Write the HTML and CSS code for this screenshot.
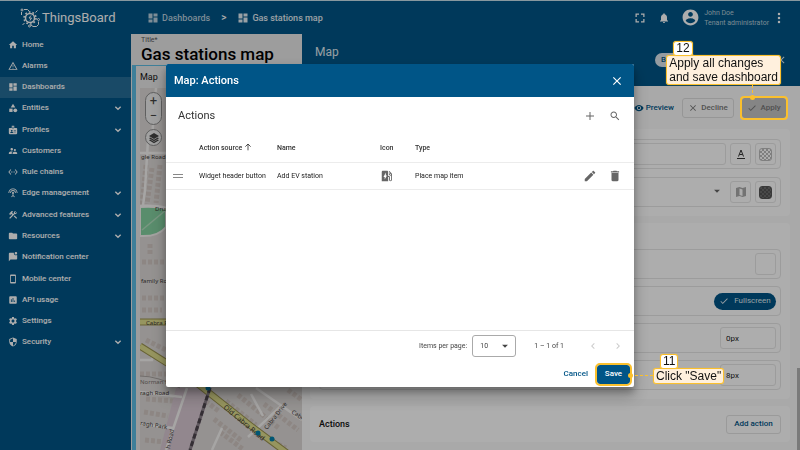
FILE: index.html
```html
<!DOCTYPE html>
<html lang="en">
<head>
<meta charset="utf-8">
<title>ThingsBoard</title>
<link rel="stylesheet" href="styles.css">
</head>
<body>
<svg class="defs" aria-hidden="true">
  <symbol id="dash" viewBox="0 0 24 24"><path d="M3 13h8V3H3v10zm0 8h8v-6H3v6zm10 0h8V11h-8v10zm0-18v6h8V3h-8z"/></symbol>
  <symbol id="down" viewBox="0 0 24 24"><path d="M4 8l8 8 8-8" fill="none" stroke="currentColor" stroke-width="4"/></symbol>
  <symbol id="close" viewBox="0 0 24 24"><path d="M19 6.41L17.59 5 12 10.59 6.41 5 5 6.41 10.59 12 5 17.59 6.41 19 12 13.41 17.59 19 19 17.59 13.41 12z"/></symbol>
  <symbol id="check" viewBox="0 0 24 24"><path d="M9 16.17L4.83 12l-1.42 1.41L9 19 21 7l-1.41-1.41z"/></symbol>
  <symbol id="caret" viewBox="0 0 24 24"><path d="M5 9l7 7 7-7z"/></symbol>
</svg>
<div class="app">
  <header class="topbar">
    <a class="brand" href="#">
      <svg class="logo" viewBox="0 0 40 40" fill="none" stroke="currentColor" stroke-width="2">
        <circle cx="20" cy="20" r="9" stroke-width="3"/><circle cx="20" cy="20" r="12" stroke-width="3" stroke-dasharray="3.500 4"/>
        <path d="M22 15l-4 5h5l-3 5"/>
        <path d="M3 14V8M8 3h7l4 4M37 27v6l-4 4h-7l-4-3M9 30l-4 4M31 9l4-4"/>
        <circle cx="4" cy="4" r="2"/><circle cx="37" cy="23" r="2"/><circle cx="19" cy="36" r="2"/>
      </svg>
      <span>ThingsBoard</span>
    </a>
    <nav class="crumbs" aria-label="Breadcrumb">
      <a class="crumb" href="#"><svg class="i12"><use href="#dash"/></svg>Dashboards</a>
      <span class="sep">&gt;</span>
      <a class="crumb current" href="#"><svg class="i12"><use href="#dash"/></svg>Gas stations map</a>
    </nav>
    <div class="tools">
      <button class="icon-btn" aria-label="Fullscreen"><svg class="i12" viewBox="0 0 24 24"><path d="M3 3h7v2.500H5.500V10H3zM14 3h7v7h-2.500V5.500H14zM3 14h2.500v4.500H10V21H3zM18.500 14H21v7h-7v-2.500h4.500z"/></svg></button>
      <button class="icon-btn" aria-label="Notifications"><svg class="i12" viewBox="0 0 24 24"><path d="M12 22c1.100 0 2-.9 2-2h-4c0 1.100.89 2 2 2zm6-6v-5c0-3.070-1.640-5.640-4.500-6.320V4c0-.83-.67-1.500-1.500-1.500s-1.500.67-1.500 1.500v.68C7.630 5.360 6 7.920 6 11v5l-2 2v1h16v-1l-2-2z"/></svg></button>
      <div class="user">
        <svg class="i18" viewBox="0 0 24 24"><path d="M12 2C6.480 2 2 6.480 2 12s4.480 10 10 10 10-4.480 10-10S17.520 2 12 2zm0 3c1.660 0 3 1.340 3 3s-1.340 3-3 3-3-1.340-3-3 1.340-3 3-3zm0 14.200c-2.500 0-4.710-1.280-6-3.220.03-1.990 4-3.080 6-3.080 1.990 0 5.970 1.090 6 3.080-1.290 1.940-3.500 3.220-6 3.220z"/></svg>
        <div><div>John Doe</div><div>Tenant administrator</div></div>
      </div>
      <button class="icon-btn" aria-label="More"><svg class="i12" viewBox="0 0 24 24"><circle cx="12" cy="4" r="2.500"/><circle cx="12" cy="12" r="2.500"/><circle cx="12" cy="20" r="2.500"/></svg></button>
    </div>
  </header>

  <nav class="side" aria-label="Main">
    <a href="#"><svg viewBox="0 0 24 24"><path d="M10 20v-6h4v6h5v-8h3L12 3 2 12h3v8z"/></svg>Home</a>
    <a href="#"><svg viewBox="0 0 24 24"><path d="M12 5.990L19.530 19H4.470L12 5.990M12 2L1 21h22L12 2zm1 14h-2v2h2v-2zm0-6h-2v4h2v-4z"/></svg>Alarms</a>
    <a href="#" class="active"><svg><use href="#dash"/></svg>Dashboards</a>
    <a href="#"><svg viewBox="0 0 24 24"><path d="M12 2l-5.500 9h11z"/><circle cx="17.500" cy="17.500" r="4.500"/><path d="M3 13.500h8v8H3z"/></svg>Entities<svg class="exp"><use href="#down"/></svg></a>
    <a href="#"><svg viewBox="0 0 24 24"><path fill-rule="evenodd" d="M9 7V2h6v5h5a2 2 0 0 1 2 2v11a2 2 0 0 1-2 2H4a2 2 0 0 1-2-2V9c0-1.100.9-2 2-2zm2-3v5h2V4zM9 12a2 2 0 1 0 .01 0zM5 19h8c0-3-8-3-8 0zm9-6v1.500h5V13zm0 3v1.500h5V16z"/></svg>Profiles<svg class="exp"><use href="#down"/></svg></a>
    <a href="#"><svg viewBox="0 0 24 24"><path d="M16.500 12c1.380 0 2.490-1.120 2.490-2.500S17.880 7 16.500 7C15.120 7 14 8.120 14 9.500s1.120 2.500 2.500 2.500zM9 11c1.660 0 2.990-1.340 2.990-3S10.660 5 9 5C7.340 5 6 6.340 6 8s1.340 3 3 3zm7.500 3c-1.830 0-5.500.92-5.500 2.750V19h11v-2.250c0-1.830-3.670-2.750-5.500-2.750zM9 13c-2.330 0-7 1.170-7 3.500V19h7v-2.250c0-.85.33-2.340 2.370-3.470C10.500 13.100 9.660 13 9 13z"/></svg>Customers</a>
    <a href="#"><svg viewBox="0 0 24 24"><path d="M7.770 6.760L6.230 5.480.82 12l5.410 6.520 1.540-1.280L3.420 12l4.350-5.240zM7 13h2v-2H7v2zm10-2h-2v2h2v-2zm-6 2h2v-2h-2v2zm6.770-7.520l-1.540 1.280L20.580 12l-4.350 5.240 1.540 1.280L23.180 12l-5.410-6.520z"/></svg>Rule chains</a>
    <a href="#"><svg viewBox="0 0 24 24"><path d="M12 5c-3.870 0-7 3.130-7 7h2c0-2.760 2.240-5 5-5s5 2.240 5 5h2c0-3.870-3.130-7-7-7zm1 9.290c.88-.39 1.500-1.260 1.500-2.290 0-1.380-1.120-2.500-2.500-2.500S9.500 10.620 9.500 12c0 1.020.62 1.900 1.500 2.290v3.300L7.590 21 9 22.410l3-3 3 3L16.410 21 13 17.590v-3.300zM12 1C5.930 1 1 5.930 1 12h2c0-4.970 4.030-9 9-9s9 4.030 9 9h2c0-6.070-4.930-11-11-11z"/></svg>Edge management<svg class="exp"><use href="#down"/></svg></a>
    <a href="#"><svg viewBox="0 0 24 24"><path d="M13.780 15.170l2.120-2.120 6 6-2.120 2.120zM17.500 10c1.930 0 3.500-1.570 3.500-3.500 0-.58-.16-1.120-.41-1.600l-2.700 2.700-1.490-1.490 2.700-2.700c-.48-.25-1.020-.41-1.600-.41C15.570 3 14 4.570 14 6.500c0 .41.08.8.21 1.160l-1.850 1.850-1.780-1.780.71-.71-1.410-1.410L12 3.490c-1.170-1.170-3.070-1.170-4.240 0L4.220 7.030l1.410 1.410H2.810l-.71.71 3.540 3.540.71-.71V9.150l1.410 1.410.71-.71 1.780 1.780-7.410 7.410 2.120 2.120L16.340 9.790c.36.13.75.21 1.160.21z"/></svg>Advanced features<svg class="exp"><use href="#down"/></svg></a>
    <a href="#"><svg viewBox="0 0 24 24"><path d="M10 4H4c-1.100 0-2 .9-2 2v12c0 1.100.9 2 2 2h16c1.100 0 2-.9 2-2V8c0-1.100-.9-2-2-2h-8l-2-2z"/></svg>Resources<svg class="exp"><use href="#down"/></svg></a>
    <a href="#"><svg viewBox="0 0 24 24"><path d="M22 6.980V16c0 1.100-.9 2-2 2H6l-4 4V4c0-1.100.9-2 2-2h10.100c-.06.32-.1.66-.1 1 0 2.760 2.240 5 5 5 1.130 0 2.160-.39 3-1.020zM16 3c0 1.660 1.340 3 3 3s3-1.340 3-3-1.340-3-3-3-3 1.340-3 3z"/></svg>Notification center</a>
    <a href="#"><svg viewBox="0 0 24 24"><path d="M17 1.010L7 1c-1.100 0-2 .9-2 2v18c0 1.100.9 2 2 2h10c1.100 0 2-.9 2-2V3c0-1.100-.9-1.990-2-1.990zM17 19H7V5h10v14z"/></svg>Mobile center</a>
    <a href="#"><svg viewBox="0 0 24 24"><path d="M19 3H5c-1.100 0-2 .9-2 2v14c0 1.100.9 2 2 2h14c1.100 0 2-.9 2-2V5c0-1.100-.9-2-2-2zM9 17H7v-7h2v7zm4 0h-2V7h2v10zm4 0h-2v-4h2v4z"/></svg>API usage</a>
    <a href="#"><svg viewBox="0 0 24 24"><path d="M19.140 12.940c.04-.3.060-.61.060-.94 0-.32-.02-.64-.07-.94l2.030-1.580c.18-.14.23-.41.120-.61l-1.920-3.320c-.12-.22-.37-.29-.59-.22l-2.390.96c-.5-.38-1.030-.7-1.620-.94L14.400 2.810c-.04-.24-.24-.41-.48-.41h-3.840c-.24 0-.43.17-.47.41L9.250 5.350c-.59.24-1.130.57-1.620.94l-2.390-.96c-.22-.08-.47 0-.59.22L2.740 8.870c-.12.21-.08.47.12.61l2.030 1.580c-.05.3-.09.63-.09.94s.02.64.07.94l-2.030 1.580c-.18.14-.23.41-.12.61l1.920 3.320c.12.22.37.29.59.22l2.390-.96c.5.38 1.030.7 1.620.94l.36 2.540c.05.24.24.41.48.41h3.840c.24 0 .44-.17.47-.41l.36-2.540c.59-.24 1.130-.56 1.620-.94l2.390.96c.22.08.47 0 .59-.22l1.920-3.320c.12-.22.070-.47-.12-.61l-2.010-1.580zM12 15.600c-1.980 0-3.600-1.620-3.600-3.600s1.620-3.600 3.600-3.600 3.600 1.620 3.600 3.600-1.620 3.600-3.600 3.600z"/></svg>Settings</a>
    <a href="#"><svg viewBox="0 0 24 24"><path d="M12 1L3 5v6c0 5.550 3.840 10.740 9 12 5.160-1.260 9-6.450 9-12V5l-9-4zm0 10.990h7c-.53 4.120-3.280 7.790-7 8.940V12H5V6.300l7-3.110v8.800z"/></svg>Security<svg class="exp"><use href="#down"/></svg></a>
  </nav>

  <section class="board">
    <div class="board-title"><small>Title*</small><h1>Gas stations map</h1></div>
    <div class="widget">
      <h2>Map</h2>
      <div class="map">
        <svg class="map-art" viewBox="140 88 162 362" preserveAspectRatio="xMinYMin slice" font-family="Noto Sans, sans-serif" font-size="6">
          <path fill="#dcd8d6" d="M140 88h162v362H140z"/>
          <g stroke="#d0c6c1" stroke-width="5" stroke-dasharray="4 2" fill="none">
            <path d="M146 165l-4 40M152 168l-5 36M160 165l-4 38M142 262h24M150 244v12M142 298h24M142 310h20M146 340l20 10M140 374h26M146 399l28 2M144 412l24 4M145 440l20 2M188 398l-16 45M196 394l24 18M226 401l30 24M238 395l42 34M214 419l28 22M220 432l24 18M264 404l34 26M256 434l30 14M288 390l14 10"/>
          </g>
          <path d="M176 388h36l-20 62h-32z" fill="#d8c8d2"/>
          <path d="M140 207q18-1 26 2v18q-8 10-26 9z" fill="#84d0a0" stroke="#f3f1ef" stroke-width="2"/>
          <path d="M142 230l24-20" stroke="#b3dfbf" stroke-width="1.500"/>
          <g fill="none" stroke="#f5f3f2" stroke-width="2.500">
            <path d="M148 140l-3 50-2 16M140 206q16-1 26 2M140 153h26M156 88l-4 50M140 392l42 5M187 388l-21 62M140 424l33 4M140 360h12l2-8M282 405l-34 32M256 388l46 32M222 428l-10 22M263 416l-12-22"/>
          </g>
          <path d="M140 376q18 0 40 12" fill="none" stroke="#a9a3a0" stroke-width="1"/>
          <g fill="none"><path d="M140 322h28M140 346l27 17 10 5 26 20 44 35 44 33" stroke="#99914f" stroke-width="7"/><path d="M140 322h28M140 346l27 17 10 5 26 20 44 35 44 33" stroke="#dedc8c" stroke-width="5"/>
          <path d="M210 388l-20 62" stroke="#8b8089" stroke-width="3"/><path d="M210 388l-20 62" stroke="#4d454d" stroke-width="3" stroke-dasharray="5 3"/></g>
          <g fill="#3d3938"><text x="141" y="159">gle Road</text><text x="155" y="211">Drumcliffe</text><text x="141" y="283">family Road</text><text x="146" y="325">Cabra Road</text><text x="140" y="384" fill="#77706d">Norman M</text><text x="140" y="395">ragh Road</text><text transform="translate(140 425) rotate(9)">ragh Park</text><text transform="translate(170 449) rotate(-78)">h Road</text><text transform="translate(223 408) rotate(40)" font-size="7">Old Cabra Road</text><text transform="translate(267 430) rotate(-52)">Cabra Drive</text><text transform="translate(291 413) rotate(34)">Cabra</text></g>
          <g fill="#007fac"><circle cx="208" cy="388" r="2.500"/><circle cx="258" cy="433" r="2.500"/><circle cx="272" cy="439" r="2.500"/></g>
        </svg>
        <div class="map-controls">
          <div class="zoom-box"><button aria-label="Zoom in">+</button><button aria-label="Zoom out">−</button></div>
          <button class="layers" aria-label="Layers"><svg class="i12" viewBox="0 0 24 24"><path d="M12 2L2 8l10 6 10-6zM4.500 11L2 12.500l10 6 10-6-2.500-1.500-7.500 4.500zM4.500 15L2 16.500l10 6 10-6-2.500-1.500-7.500 4.500z"/></svg></button>
        </div>
      </div>
    </div>
  </section>

  <section class="panel">
    <header class="panel-head"><h2>Map</h2><div class="panel-modes"><button class="mode">Basic</button><button class="icon-btn" aria-label="Close panel"><svg class="i12"><use href="#close"/></svg></button></div></header>
    <div class="panel-body">
      <div class="panel-actions">
        <button class="txt-btn"><svg class="i10" viewBox="0 0 24 24"><path d="M12 4.500C7 4.500 2.730 7.610 1 12c1.730 4.390 6 7.500 11 7.500s9.270-3.110 11-7.500c-1.730-4.390-6-7.500-11-7.500zM12 17c-2.760 0-5-2.240-5-5s2.240-5 5-5 5 2.240 5 5-2.240 5-5 5zm0-8a3 3 0 1 0 0 6 3 3 0 0 0 0-6z"/></svg>Preview</button>
        <button class="flat-btn outline"><svg class="i10"><use href="#close"/></svg>Decline</button>
        <div class="apply-wrap">
          <button class="flat-btn filled"><svg class="i10"><use href="#check"/></svg>Apply</button>
          <div class="ring"></div>
          <div class="note note-apply"><b>12</b><p>Apply all changes<br>and save dashboard</p><i></i></div>
        </div>
      </div>
      <div class="cards">
        <div class="card first">
          <div class="row"><input class="field grow" type="text" aria-label="Text"><button class="sq" aria-label="Font"><svg class="i12" viewBox="0 0 24 24"><path d="M7 17l5-13 5 13M9 13h6" stroke="currentColor" stroke-width="2" fill="none"/><path d="M4 20h16v2H4z"/></svg></button><button class="sq" aria-label="Color"><span class="swatch light"></span></button></div>
          <div class="row"><span class="grow right"><svg class="i10"><use href="#caret"/></svg></span><button class="sq faint" aria-label="Map"><svg class="i12" viewBox="0 0 24 24"><path fill-rule="evenodd" d="M2 4l7-2 6 2 7-2v18l-7 2-6-2-7 2zm7 1v13l6 2V7z"/></svg></button><button class="sq" aria-label="Icon color"><span class="swatch dark"></span></button></div>
        </div>
        <div class="card second">
          <div class="row"><span class="grow"></span><button class="sq" aria-label="Background"></button></div>
          <div class="row"><span class="grow"></span><button class="pill"><svg class="i10"><use href="#check"/></svg>Fullscreen</button></div>
          <div class="row"><span class="grow"></span><input class="field num" type="text" aria-label="Padding" value="0px"></div>
          <div class="row"><span class="grow"></span><input class="field num" type="text" aria-label="Border radius" value="8px"></div>
        </div>
        <div class="card actions"><h3>Actions</h3><button class="add">Add action</button></div>
      </div>
      <div class="scroll"></div>
    </div>
  </section>
</div>

<div class="overlay">
  <section class="dialog" role="dialog" aria-labelledby="dlg">
    <header class="dlg-head"><h2 id="dlg">Map: Actions</h2><button class="icon-btn" aria-label="Close"><svg class="i14"><use href="#close"/></svg></button></header>
    <div class="dlg-tools"><h3>Actions</h3>
      <button class="icon-btn" aria-label="Add"><svg class="i12" viewBox="0 0 24 24"><path d="M20 13h-7v7h-2v-7H4v-2h7V4h2v7h7z"/></svg></button>
      <button class="icon-btn" aria-label="Search"><svg class="i12" viewBox="0 0 24 24"><path d="M15.500 14h-.79l-.28-.27C15.410 12.590 16 11.110 16 9.500 16 5.910 13.090 3 9.500 3S3 5.910 3 9.500 5.910 16 9.500 16c1.610 0 3.090-.59 4.230-1.570l.27.28v.79l5 4.990L20.490 19l-4.990-5zm-6 0C7.010 14 5 11.990 5 9.500S7.010 5 9.500 5 14 7.010 14 9.500 11.990 14 9.500 14z"/></svg></button>
    </div>
    <div class="dlg-table">
      <table>
        <colgroup><col class="c-drag"><col class="c-src"><col class="c-name"><col class="c-icon"><col><col class="c-act"></colgroup>
        <thead><tr><th></th><th>Action source <svg class="i8" viewBox="0 0 24 24"><path d="M12 22V3M4 11l8-8 8 8" fill="none" stroke="currentColor" stroke-width="2.500"/></svg></th><th>Name</th><th>Icon</th><th>Type</th><th></th></tr></thead>
        <tbody><tr>
          <td><svg class="i12" viewBox="0 0 24 24"><path d="M2 8h20v2H2zM2 14h20v2H2z"/></svg></td><td>Widget header button</td><td>Add EV station</td>
          <td><svg class="i14" viewBox="0 0 24 24"><path d="M19.770 7.230l.01-.01-3.720-3.720L15 4.560l2.110 2.110C16.170 7 15.500 7.930 15.500 9c0 1.380 1.120 2.500 2.500 2.500.36 0 .69-.08 1-.21v7.210c0 .55-.45 1-1 1s-1-.45-1-1V14c0-1.100-.9-2-2-2h-1V5c0-1.100-.9-2-2-2H5c-1.100 0-2 .9-2 2v16h11v-7.500h1.500v5c0 1.380 1.120 2.500 2.500 2.500s2.500-1.120 2.500-2.500V9c0-.69-.28-1.320-.73-1.770zM18 10c-.55 0-1-.45-1-1s.45-1 1-1 1 .45 1 1-.45 1-1 1zM8 18v-4.500H6L10 6v5h2l-4 7z"/></svg></td>
          <td>Place map item</td>
          <td><div class="row-btns"><button class="icon-btn" aria-label="Edit"><svg class="i14" viewBox="0 0 24 24"><path d="M3 17.250V21h3.750L17.810 9.940l-3.750-3.750L3 17.250zM20.710 7.040c.39-.39.39-1.020 0-1.410l-2.340-2.340c-.39-.39-1.020-.39-1.410 0l-1.830 1.830 3.750 3.750 1.830-1.830z"/></svg></button><button class="icon-btn" aria-label="Delete"><svg class="i14" viewBox="0 0 24 24"><path d="M6 19c0 1.100.9 2 2 2h8c1.100 0 2-.9 2-2V7H6v12zM19 4h-3.500l-1-1h-5l-1 1H5v2h14V4z"/></svg></button></div></td>
        </tr></tbody>
      </table>
    </div>
    <div class="pager">
      <label for="size">Items per page:</label>
      <span class="select"><select id="size"><option>10</option></select><svg class="i10"><use href="#caret"/></svg></span>
      <span class="range">1 – 1 of 1</span>
      <button class="icon-btn" aria-label="Previous" disabled><svg class="i12" viewBox="0 0 24 24"><path d="M15.410 7.410L14 6l-6 6 6 6 1.410-1.410L10.830 12z"/></svg></button>
      <button class="icon-btn" aria-label="Next" disabled><svg class="i12" viewBox="0 0 24 24"><path d="M10 6L8.590 7.410 13.170 12l-4.580 4.590L10 18l6-6z"/></svg></button>
    </div>
    <footer class="dlg-foot"><button class="cancel">Cancel</button>
      <div class="save-wrap"><button class="save">Save</button><div class="note note-save"><b>11</b><p>Click "Save"</p><i></i></div></div>
    </footer>
  </section>
</div>
</body>
</html>
```

FILE: styles.css
```css
* { box-sizing: border-box; }
body { margin: 0; font: 7px/10px Roboto, sans-serif; color: #222; }
h1, h2, h3, p { margin: 0; font-weight: 500; }
a { color: inherit; text-decoration: none; }
button, input, select { font: inherit; color: inherit; margin: 0; padding: 0; border: 0; background: none; border-radius: 3px; }
button { display: inline-flex; align-items: center; justify-content: center; }
svg { fill: currentColor; flex: none; }
.defs { position: absolute; width: 0; height: 0; }
.i8 { width: 8px; height: 8px; }
.i10 { width: 10px; height: 10px; }
.i12 { width: 12px; height: 12px; }
.i14 { width: 14px; height: 14px; }
.i18 { width: 19px; height: 19px; }

.app {
  display: grid;
  grid-template: 34px minmax(0, 1fr) / 131px 171px minmax(0, 1fr);
  height: 100vh;
  background: #005587;
  overflow: hidden;
}
.topbar { grid-column: 1 / -1; display: flex; align-items: center; color: #fff; border-top: 1px solid #c9e0ea; }
.brand { display: flex; align-items: center; gap: 2px; width: 147px; padding-left: 20px; font-size: 13px; line-height: 16px; }
.logo { width: 20px; height: 20px; fill: none; }
.crumbs { display: flex; align-items: center; gap: 11px; font-size: 9px; font-weight: 500; }
.crumb { display: flex; align-items: center; gap: 3px; color: #b9cfdd; }
.current { color: #e4edf3; }
.sep { font-size: 10px; }
.tools { display: flex; align-items: center; gap: 12px; margin-left: auto; padding-right: 15px; }
.user { display: flex; align-items: center; gap: 4px; color: #b6cbd8; margin: 0 -8px 0 -1px; }
.user svg { color: #fff; }

.side { display: grid; grid-auto-rows: 1fr; height: 319px; color: #fff; font-size: 8px; font-weight: 500; }
.side a { display: flex; align-items: center; gap: 4px; padding: 0 8px; }
.side svg { width: 10px; height: 10px; }
.side .exp { width: 8px; height: 8px; margin: 0 1px 0 auto; }
.side .active { background: rgba(255, 255, 255, .15); }

.board { display: flex; flex-direction: column; background: #e8e8e8; min-height: 0; }
.board-title { height: 31px; padding: 1px 10px 0; color: #555; }
.board-title small { display: block; font-size: 7px; line-height: 10px; }
.board-title h1 { color: #000; font-size: 17px; line-height: 18px; white-space: nowrap; }
.widget { flex: 1; display: flex; flex-direction: column; min-height: 0; margin-left: 1px; border: solid #5cbce2; border-width: 1px 0 0 4px; padding-left: 4px; }
.widget h2 { font-size: 9px; line-height: 22px; font-weight: 400; color: #111; }
.map { position: relative; flex: 1; min-height: 0; overflow: hidden; }
.map-art { display: block; width: 100%; height: 100%; }
.map-controls { position: absolute; left: 5px; top: 4px; display: flex; flex-direction: column; align-items: center; gap: 4px; }
.zoom-box { display: grid; width: 17px; height: 33px; border: 1px solid #8c8c8c; border-radius: 9px; background: #eee; font-size: 13px; color: #444; }
.layers { width: 17px; height: 17px; border: 1px solid #8c8c8c; border-radius: 50%; background: #eee; color: #444; }

.panel { display: flex; flex-direction: column; min-width: 0; min-height: 0; }
.panel-head { display: flex; align-items: center; justify-content: space-between; height: 52px; padding: 0 13px 16px; color: #dfe9f0; }
.panel-head h2 { font-size: 12px; line-height: 14px; font-weight: 400; }
.panel-modes { display: flex; align-items: center; gap: 79px; margin-top: 16px; }
.mode { width: 41px; height: 14px; padding-left: 6px; justify-content: flex-start; border-radius: 7px; background: #dce6ed; color: #005587; font-size: 8px; font-weight: 500; }
.panel-body { position: relative; flex: 1; background: #fafafa; min-height: 0; }
.panel-actions { display: flex; justify-content: flex-end; align-items: center; gap: 8px; height: 43px; padding-right: 14px; font-size: 8px; font-weight: 500; }
.txt-btn { gap: 2px; color: #005587; }
.flat-btn { gap: 3px; height: 20px; color: #777; }
.outline { width: 52px; border: 1px solid #ddd; }
.filled { width: 44px; background: #c4c4c4; }
.apply-wrap { position: relative; display: flex; }
.ring { position: absolute; inset: -2px; border: 2px solid #fbc02d; border-radius: 4px; z-index: 20; }
.cards { padding: 0 10px 8px 8px; display: grid; gap: 7px; }
.card { padding: 0 9px; background: #fff; border-radius: 4px; }
.first { display: grid; gap: 8px; padding-top: 10px; padding-bottom: 9px; }
.second { display: grid; gap: 7px; padding-top: 26px; padding-bottom: 9px; }
.row { display: flex; align-items: center; gap: 4px; height: 30px; padding-right: 4px; border: 1px solid #e6e6e6; border-radius: 4px; }
.grow { flex: 1; min-width: 0; }
.right { text-align: right; color: #666; padding-right: 4px; }
.field { height: 22px; border: 1px solid #e6e6e6; }
.num { width: 56px; padding-left: 5px; font-size: 8px; color: #222; }
.sq { width: 21px; height: 22px; border: 1px solid #e6e6e6; color: #333; }
.faint { color: #aaa; }
.swatch { width: 13px; height: 13px; border-radius: 3px; border: 1px solid #bbb; background: repeating-conic-gradient(#bbb 0 25%, #fff 0 50%) 0 0 / 4px 4px; }
.dark { border-color: #555; background: repeating-conic-gradient(#555 0 25%, #6c6c6c 0 50%) 0 0 / 4px 4px; }
.pill { gap: 5px; width: 62px; height: 17px; border-radius: 9px; background: #005587; color: #dfe9f0; font-size: 8px; }
.actions { display: flex; align-items: center; justify-content: space-between; height: 36px; }
.actions h3 { font-size: 9px; color: #111; }
.add { width: 55px; height: 19px; border: 1px solid #e3e3e3; color: #005587; font-size: 8px; font-weight: 500; }
.scroll { position: absolute; right: 0; bottom: 0; width: 3px; height: 82px; background: #b4b4b4; }

.overlay { position: fixed; inset: 0; z-index: 10; display: flex; align-items: center; justify-content: center; padding-top: 1px; background: rgba(0, 0, 0, .32); }
.dialog { width: 468px; max-width: 95%; background: #fff; border-radius: 2px; box-shadow: 0 5px 7px rgba(0, 0, 0, .25), 0 9px 16px 2px rgba(0, 0, 0, .2); }
.dlg-head { display: flex; align-items: center; justify-content: space-between; height: 33px; padding: 0 10px 0 8px; background: #005587; color: #fff; border-radius: 2px 2px 0 0; }
.dlg-head h2 { font-size: 11px; line-height: 14px; }
.dlg-tools { display: flex; align-items: center; gap: 13px; height: 38px; padding: 0 13px 0 12px; color: #666; }
.dlg-tools h3 { margin-right: auto; font-size: 11px; line-height: 14px; font-weight: 400; color: #333; }
.dlg-table { height: 196px; border-bottom: 1px solid #e6e6e6; }
table { width: 100%; table-layout: fixed; border-collapse: collapse; font-size: 7px; }
th, td { padding: 0; height: 27px; text-align: left; vertical-align: middle; border-bottom: 1px solid #ececec; }
th { font-weight: 500; color: #333; }
th svg { vertical-align: -1px; }
td svg { display: block; color: #666; }
td:first-child { padding-left: 6px; }
td:first-child svg { color: #888; }
.c-drag { width: 33px; }
.c-src { width: 78px; }
.c-name { width: 103px; }
.c-icon { width: 35px; }
.c-act { width: 51px; }
.row-btns { display: flex; gap: 11px; }
.pager { display: flex; align-items: center; justify-content: flex-end; height: 30px; padding-right: 10px; color: #444; }
.select { position: relative; width: 44px; height: 22px; margin: 0 18px 0 5px; border: 1px solid #aaa; border-radius: 3px; display: flex; align-items: center; }
.select select { appearance: none; width: 100%; height: 100%; padding-left: 7px; }
.select svg { position: absolute; right: 5px; pointer-events: none; }
.range { margin-right: 23px; }
.pager button { color: #ccc; }
.pager button:last-child { margin-left: 13px; }
.dlg-foot { display: flex; align-items: center; justify-content: flex-end; gap: 9px; height: 26px; padding-right: 4px; font-size: 8px; font-weight: 500; }
.cancel { color: #005587; }
.save-wrap { position: relative; display: flex; }
.save { width: 33px; height: 19px; background: #005587; color: #fff; outline: 2px solid #fbc02d; }

.note { position: absolute; z-index: 20; font: 12px/14px "Liberation Sans", sans-serif; color: #111; }
.note b, .note p { display: block; width: max-content; border: 1px solid #fbc02d; border-radius: 3px; box-shadow: 0 0 1px #fbc02d; font-weight: 400; }
.note b { position: relative; z-index: 1; margin: 0 0 -1px 7px; padding: 0 2px; line-height: 13px; background: #fff; }
.note p { padding: 0 2px; background: #fff0dd; }
.note i { position: absolute; }
.note i::after { content: ""; position: absolute; width: 5px; height: 5px; border-radius: 50%; background: #fbc02d; }
.note-apply { right: 5px; bottom: 100%; margin-bottom: 13px; }
.note-apply i { right: 28px; top: 100%; height: 13px; border-left: 1px dashed #fbc02d; }
.note-apply i::after { left: -3px; bottom: -2px; }
.note-save { left: 100%; top: -11px; margin-left: 23px; }
.note-save i { right: 100%; bottom: 8px; width: 23px; border-top: 1px dashed #fbc02d; }
.note-save i::after { left: -2px; top: -3px; }
```
